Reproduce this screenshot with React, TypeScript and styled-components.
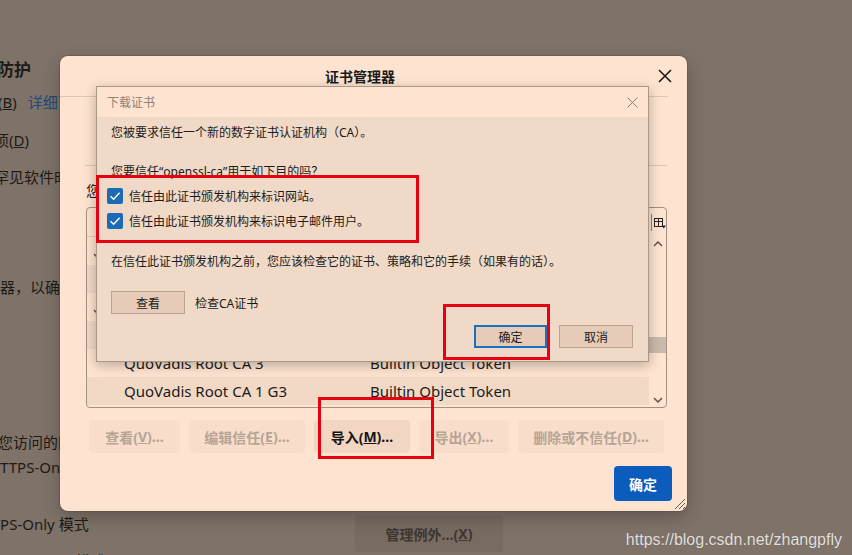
import styled, { createGlobalStyle } from "styled-components";

const GlobalStyle = createGlobalStyle`
  html, body {
    margin: 0;
    padding: 0;
  }
  body {
    background: #7f7369;
    font-family: "Noto Sans", "Noto Sans CJK SC", sans-serif;
  }
`;

const Page = styled.div`
  position: relative;
  width: 852px;
  height: 555px;
  overflow: hidden;
  background: #7f7369;
`;

/* the dimmed settings page behind the dialogs */
const Backdrop = styled.div`
  display: flex;
  flex-direction: column;
  color: #1e1a16;
  font-size: 15px;
`;

const Line = styled.div<{ $mt: number; $x: number }>`
  margin-top: ${(p) => p.$mt}px;
  margin-left: ${(p) => p.$x}px;
  height: 20px;
  line-height: 20px;
  white-space: nowrap;
`;

const Heading = styled(Line)`
  height: 22px;
  line-height: 22px;
  font-size: 17px;
  font-weight: 700;
`;

const Link = styled.span`
  color: #21497a;
  margin-left: 11px;
`;

const ExceptionRow = styled.div`
  display: flex;
  align-items: flex-start;
  height: 20px;
  margin-top: 37px;
`;

const ExceptionText = styled.div`
  flex: 0 0 383px;
  margin-left: -28px;
  line-height: 20px;
  white-space: nowrap;
`;

const GhostButton = styled.div`
  flex: none;
  margin-top: 1px;
  width: 148px;
  height: 37px;
  border-radius: 4px;
  background: #786b61;
  color: #3e3630;
  font-size: 14px;
  font-weight: 700;
  display: flex;
  align-items: center;
  justify-content: center;
`;

/* certificate manager */
const CertDialog = styled.div`
  position: absolute;
  left: 60px;
  top: 56px;
  width: 627px;
  height: 455px;
  box-sizing: border-box;
  background: #fee4d0;
  border-radius: 8px;
  box-shadow: 0 0 0 1px rgba(70, 50, 40, 0.25), 0 6px 18px rgba(0, 0, 0, 0.25);
  display: flex;
  flex-direction: column;
  color: #1b1b1b;
`;

const DialogHeader = styled.div`
  display: flex;
  align-items: center;
  height: 40px;
  padding-left: 8px;
`;

const DialogTitle = styled.div`
  flex: 1;
  text-align: center;
  font-size: 14px;
  font-weight: 700;
`;

const CloseButton = styled.div`
  width: 26px;
  height: 26px;
  margin-right: 9px;
  display: flex;
  align-items: center;
  justify-content: center;
`;

const HeaderRule = styled.div`
  height: 1px;
  background: #dcc6b5;
  margin-right: 19px;
`;

/* tab strip, its labels sit under the prompt */
const TabBar = styled.div`
  height: 68px;
  margin: 0 20px 0 25px;
  border-bottom: 1px solid #dcc6b5;
`;

const DialogBody = styled.div`
  padding: 0 20px 0 26px;
  display: flex;
  flex-direction: column;
`;

const Desc = styled.div`
  margin-top: 14px;
  line-height: 22px;
  font-size: 14px;
  white-space: nowrap;
`;

const CertList = styled.div`
  margin-top: 5px;
  height: 201px;
  box-sizing: border-box;
  border: 1px solid #a09184;
  border-radius: 4px;
  display: grid;
  grid-template-columns: 1fr 17px;
  overflow: hidden;
`;

const ListMain = styled.div`
  display: flex;
  flex-direction: column;
`;

const ListHead = styled.div`
  height: 29px;
  box-sizing: border-box;
  border-bottom: 1px solid #e2ccbb;
`;

const ListRow = styled.div<{ $alt: boolean }>`
  height: 28px;
  display: grid;
  grid-template-columns: 37px 246px 1fr;
  align-items: center;
  font-size: 15px;
  white-space: nowrap;
  background: ${(p) => (p.$alt ? "#f2d9c6" : "transparent")};
`;

const Twisty = styled.div`
  padding: 10px 0 0 6px;
  display: flex;
`;

const ScrollColumn = styled.div`
  display: flex;
  flex-direction: column;
`;

const PickerCell = styled.div`
  height: 29px;
  display: flex;
  align-items: center;
  gap: 2px;
`;

const PickerDivider = styled.div`
  width: 1px;
  height: 17px;
  margin-left: 2px;
  background: #8f8174;
`;

const Track = styled.div`
  flex: 1;
  display: flex;
  flex-direction: column;
`;

const ArrowBox = styled.div`
  height: 14px;
  display: flex;
  align-items: center;
  justify-content: center;
`;

const Thumb = styled.div`
  margin-top: auto;
  margin-bottom: 40px;
  height: 16px;
  background: #cbb9ab;
`;

const ButtonRow = styled.div`
  display: flex;
  gap: 9px;
  margin: 12px 0 0 3px;
`;

const ActionButton = styled.div<{ $w: number; $enabled?: boolean }>`
  width: ${(p) => p.$w}px;
  height: 33px;
  border-radius: 4px;
  background: ${(p) => (p.$enabled ? "#f2d6c3" : "#f8ddcb")};
  color: ${(p) => (p.$enabled ? "#141414" : "#b6a495")};
  font-size: 14px;
  font-weight: 700;
  display: flex;
  align-items: center;
  justify-content: center;
  white-space: nowrap;
`;

const Footer = styled.div`
  margin-top: auto;
  display: flex;
  justify-content: flex-end;
  padding: 0 15px 10px 0;
`;

const PrimaryButton = styled.div`
  width: 58px;
  height: 35px;
  border-radius: 4px;
  background: #0b5cbd;
  color: #fff;
  font-size: 14px;
  font-weight: 700;
  display: flex;
  align-items: center;
  justify-content: center;
`;

const Grip = styled.svg`
  position: absolute;
  right: 1px;
  bottom: 1px;
`;

/* download certificate prompt */
const TrustDialog = styled.div`
  position: absolute;
  left: 96px;
  top: 86px;
  width: 553px;
  height: 276px;
  box-sizing: border-box;
  border: 1px solid #a99888;
  background: #f0d9c7;
  box-shadow: 0 3px 12px rgba(0, 0, 0, 0.28);
  display: flex;
  flex-direction: column;
  font-size: 12px;
  color: #1b1b1b;
`;

const TrustTitleBar = styled.div`
  height: 30px;
  flex: none;
  background: #fee4d0;
  display: flex;
  align-items: center;
  padding-left: 10px;
  color: #8d8178;
`;

const TrustTitle = styled.div`
  flex: 1;
`;

const TrustClose = styled.div`
  width: 11px;
  height: 11px;
  margin-right: 10px;
  display: flex;
`;

const TrustBody = styled.div`
  padding: 7px 15px 0 14px;
  display: flex;
  flex-direction: column;
`;

const Para = styled.div<{ $mt: number }>`
  margin-top: ${(p) => p.$mt}px;
  line-height: 18px;
  white-space: nowrap;
`;

const CheckRow = styled.div<{ $mt: number }>`
  margin-top: ${(p) => p.$mt}px;
  margin-left: -4px;
  height: 22px;
  display: flex;
  align-items: center;
`;

const CheckBox = styled.span`
  width: 16px;
  height: 16px;
  border-radius: 2px;
  background: #1c6bb4;
  display: flex;
  align-items: center;
  justify-content: center;
`;

const CheckLabel = styled.span`
  margin-left: 6px;
`;

const ViewRow = styled.div`
  margin-top: 20px;
  height: 23px;
  display: flex;
  align-items: center;
`;

const SmallButton = styled.div<{ $w: number; $focused?: boolean }>`
  width: ${(p) => p.$w}px;
  height: 23px;
  box-sizing: border-box;
  border: ${(p) => (p.$focused ? "2px solid #1a70c1" : "1px solid #b8a291")};
  background: #e5cbb8;
  display: flex;
  align-items: center;
  justify-content: center;
`;

const ViewLabel = styled.span`
  margin-left: 10px;
`;

const TrustFooter = styled.div`
  margin-top: 11px;
  display: flex;
  justify-content: flex-end;
  gap: 12px;
`;

/* red annotation frames drawn on the screenshot */
const Mark = styled.div<{ $x: number; $y: number; $w: number; $h: number }>`
  position: absolute;
  left: ${(p) => p.$x}px;
  top: ${(p) => p.$y}px;
  width: ${(p) => p.$w}px;
  height: ${(p) => p.$h}px;
  box-sizing: border-box;
  border: 3px solid #e50012;
`;

const Watermark = styled.div`
  position: absolute;
  right: 10px;
  bottom: 6px;
  font-family: "Liberation Sans", Arial, sans-serif;
  font-size: 16px;
  color: rgba(255, 255, 255, 0.82);
  text-shadow: 0 0 1px rgba(0, 0, 0, 0.25);
`;

// the first rows lie under the prompt, only their twisties peek out
const rows = [
  { twisty: true, name: "", token: "" },
  { twisty: false, name: "", token: "" },
  { twisty: true, name: "", token: "" },
  { twisty: false, name: "", token: "" },
  { twisty: false, name: "QuoVadis Root CA 3", token: "Builtin Object Token" },
  { twisty: false, name: "QuoVadis Root CA 1 G3", token: "Builtin Object Token" },
];

const Chevron = ({ up }: { up?: boolean }) => (
  <svg width="10" height="6" viewBox="0 0 10 6">
    <path
      d={up ? "M1 5 L5 1 L9 5" : "M1 1 L5 5 L9 1"}
      fill="none"
      stroke="#5f554e"
      strokeWidth="1.5"
    />
  </svg>
);

const Check = () => (
  <svg width="16" height="16" viewBox="0 0 16 16">
    <path d="M3.5 8.2 L6.6 11.2 L12.6 4.8" fill="none" stroke="#fff" strokeWidth="1.4" />
  </svg>
);

function App() {
  return (
    <Page>
      <GlobalStyle />
      <Backdrop>
        <Heading $mt={59} $x={-20}>
          件防护
        </Heading>
        <Line $mt={11} $x={-107}>
          阻止危险的下载(<u>B</u>)<Link>详细了解</Link>
        </Line>
        <Line $mt={18} $x={-111}>
          询问危险软件选项(<u>D</u>)
        </Line>
        <Line $mt={17} $x={-111}>
          警告不需要的及罕见软件时发出提示
        </Line>
        <Line $mt={90} $x={-90}>
          查询响应服务器，以确认证书的当前有效性
        </Line>
        <Line $mt={135} $x={-77}>
          此模式会将您访问的网站连接升级为加密连接
        </Line>
        <Line $mt={5} $x={-11}>
          HTTPS-Only 模式
        </Line>
        <ExceptionRow>
          <ExceptionText>HTTPS-Only 模式</ExceptionText>
          <GhostButton>
            管理例外…(<u>X</u>)
          </GhostButton>
        </ExceptionRow>
        <Line $mt={17} $x={-11}>
          HTTPS-Only 模式
        </Line>
      </Backdrop>

      <CertDialog>
        <DialogHeader>
          <DialogTitle>证书管理器</DialogTitle>
          <CloseButton>
            <svg width="14" height="14" viewBox="0 0 14 14">
              <path d="M1 1 L13 13 M13 1 L1 13" stroke="#1b1b1b" strokeWidth="1.6" />
            </svg>
          </CloseButton>
        </DialogHeader>
        <HeaderRule />
        <TabBar />
        <DialogBody>
          <Desc>您有用于识别这些证书颁发机构的证书</Desc>
          <CertList>
            <ListMain>
              <ListHead />
              {rows.map((r, i) => (
                <ListRow key={i} $alt={i % 2 === 1}>
                  <Twisty>{r.twisty && <Chevron />}</Twisty>
                  <span>{r.name}</span>
                  <span>{r.token}</span>
                </ListRow>
              ))}
            </ListMain>
            <ScrollColumn>
              <PickerCell>
                <PickerDivider />
                <svg width="12" height="12" viewBox="0 0 12 12">
                  <rect x="0.5" y="1.5" width="8" height="8" fill="none" stroke="#2a2420" />
                  <path d="M0.5 4.5 H8.5 M4.5 1.5 V9.5" stroke="#2a2420" />
                  <path d="M7.5 8.5 H12 L9.75 11.5 Z" fill="#2a2420" />
                </svg>
              </PickerCell>
              <Track>
                <ArrowBox>
                  <Chevron up />
                </ArrowBox>
                <Thumb />
                <ArrowBox>
                  <Chevron />
                </ArrowBox>
              </Track>
            </ScrollColumn>
          </CertList>
          <ButtonRow>
            <ActionButton $w={91}>
              查看(<u>V</u>)…
            </ActionButton>
            <ActionButton $w={116}>
              编辑信任(<u>E</u>)…
            </ActionButton>
            <ActionButton $w={96} $enabled>
              导入(<u>M</u>)…
            </ActionButton>
            <ActionButton $w={90}>
              导出(<u>X</u>)…
            </ActionButton>
            <ActionButton $w={146}>
              删除或不信任(<u>D</u>)…
            </ActionButton>
          </ButtonRow>
        </DialogBody>
        <Footer>
          <PrimaryButton>确定</PrimaryButton>
        </Footer>
        <Grip width="14" height="14" viewBox="0 0 14 14">
          <path d="M13 3 L3 13 M13 7 L7 13 M13 11 L11 13" stroke="#6d5f55" strokeWidth="1" />
        </Grip>
      </CertDialog>

      <TrustDialog>
        <TrustTitleBar>
          <TrustTitle>下载证书</TrustTitle>
          <TrustClose>
            <svg width="11" height="11" viewBox="0 0 11 11">
              <path d="M0.5 0.5 L10.5 10.5 M10.5 0.5 L0.5 10.5" stroke="#8a7e75" strokeWidth="1" />
            </svg>
          </TrustClose>
        </TrustTitleBar>
        <TrustBody>
          <Para $mt={0}>您被要求信任一个新的数字证书认证机构（CA）。</Para>
          <Para $mt={21}>您要信任“openssl-ca”用于如下目的吗？</Para>
          <CheckRow $mt={4}>
            <CheckBox>
              <Check />
            </CheckBox>
            <CheckLabel>信任由此证书颁发机构来标识网站。</CheckLabel>
          </CheckRow>
          <CheckRow $mt={3}>
            <CheckBox>
              <Check />
            </CheckBox>
            <CheckLabel>信任由此证书颁发机构来标识电子邮件用户。</CheckLabel>
          </CheckRow>
          <Para $mt={21}>
            在信任此证书颁发机构之前，您应该检查它的证书、策略和它的手续（如果有的话）。
          </Para>
          <ViewRow>
            <SmallButton $w={74}>查看</SmallButton>
            <ViewLabel>检查CA证书</ViewLabel>
          </ViewRow>
          <TrustFooter>
            <SmallButton $w={73} $focused>
              确定
            </SmallButton>
            <SmallButton $w={74}>取消</SmallButton>
          </TrustFooter>
        </TrustBody>
      </TrustDialog>

      <Mark $x={96} $y={175} $w={323} $h={68} />
      <Mark $x={443} $y={304} $w={107} $h={56} />
      <Mark $x={318} $y={397} $w={116} $h={62} />

      <Watermark>https://blog.csdn.net/zhangpfly</Watermark>
    </Page>
  );
}

export default App;
